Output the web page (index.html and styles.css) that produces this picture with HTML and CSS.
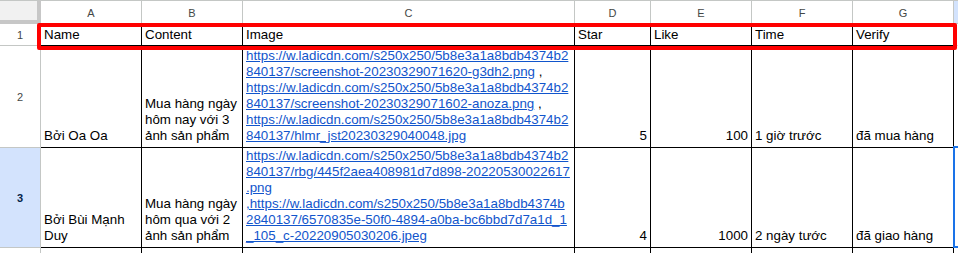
FILE: index.html
```html
<!DOCTYPE html>
<html lang="vi">
<head>
<meta charset="utf-8">
<title>Sheet</title>
<link rel="stylesheet" href="styles.css">
</head>
<body>
<div class="sheet">
  <div class="grid">
    <div class="corner"></div>
    <div class="colhead">A</div>
    <div class="colhead">B</div>
    <div class="colhead">C</div>
    <div class="colhead">D</div>
    <div class="colhead">E</div>
    <div class="colhead">F</div>
    <div class="colhead">G</div>
    <div class="colhead colhead-sel"></div>

    <div class="rowhead">1</div>
    <div class="cell head">Name</div>
    <div class="cell head">Content</div>
    <div class="cell head">Image</div>
    <div class="cell head">Star</div>
    <div class="cell head">Like</div>
    <div class="cell head">Time</div>
    <div class="cell head">Verify</div>
    <div class="cell empty"></div>

    <div class="rowhead">2</div>
    <div class="cell">Bởi Oa Oa</div>
    <div class="cell">Mua hàng ngày<br>hôm nay với 3<br>ảnh sản phẩm</div>
    <div class="cell"><span><a href="#">https://w.ladicdn.com/s250x250/5b8e3a1a8bdb4374b2<br>840137/screenshot-20230329071620-g3dh2.png</a> ,<br><a href="#">https://w.ladicdn.com/s250x250/5b8e3a1a8bdb4374b2<br>840137/screenshot-20230329071602-anoza.png</a> ,<br><a href="#">https://w.ladicdn.com/s250x250/5b8e3a1a8bdb4374b2<br>840137/hlmr_jst20230329040048.jpg</a></span></div>
    <div class="cell num">5</div>
    <div class="cell num">100</div>
    <div class="cell">1 giờ trước</div>
    <div class="cell">đã mua hàng</div>
    <div class="cell empty"></div>

    <div class="rowhead rowhead-sel">3</div>
    <div class="cell">Bởi Bùi Mạnh<br>Duy</div>
    <div class="cell">Mua hàng ngày<br>hôm qua với 2<br>ảnh sản phẩm</div>
    <div class="cell"><span><a href="#">https://w.ladicdn.com/s250x250/5b8e3a1a8bdb4374b2<br>840137/rbg/445f2aea408981d7d898-20220530022617<br>.png<br>,https://w.ladicdn.com/s250x250/5b8e3a1a8bdb4374b<br>2840137/6570835e-50f0-4894-a0ba-bc6bbd7d7a1d_1<br>_105_c-20220905030206.jpeg</a></span></div>
    <div class="cell num">4</div>
    <div class="cell num">1000</div>
    <div class="cell">2 ngày tước</div>
    <div class="cell">đã giao hàng</div>
    <div class="cell empty"></div>

    <div class="rowhead"></div>
    <div class="cell"></div>
    <div class="cell"></div>
    <div class="cell"></div>
    <div class="cell"></div>
    <div class="cell"></div>
    <div class="cell"></div>
    <div class="cell"></div>
    <div class="cell empty"></div>
  </div>
  <div class="highlight"></div>
  <div class="selection"></div>
</div>
</body>
</html>
```
FILE: styles.css
```css
* { box-sizing: border-box; }
html, body { margin: 0; padding: 0; background: #fff; }
body {
  font-family: "Liberation Sans", Arial, sans-serif;
  color: #000;
  overflow: hidden;
}
.sheet {
  position: relative;
  width: 958px;
  height: 253px;
  overflow: hidden;
}
.grid {
  display: grid;
  grid-template-columns: 41px 101px 101px 332px 76px 101px 101px 101px 1fr;
  grid-template-rows: 24px 22px 102px 100px 20px;
}
.corner {
  background: #f1f1f1;
  border-right: 4px solid #c7c7c7;
  border-bottom: 4px solid #c7c7c7;
  border-top: 1px solid #c4c7c5;
}
.colhead {
  border-top: 1px solid #c4c7c5;
  border-right: 1px solid #c4c7c5;
  border-bottom: 1px solid #c4c7c5;
  font-size: 11px;
  color: #444746;
  display: flex;
  align-items: center;
  justify-content: center;
  padding-top: 1px;
}
.colhead-sel { background: #d3e3fd; border-right: none; }
.rowhead {
  border-right: 1px solid #c4c7c5;
  border-bottom: 1px solid #c4c7c5;
  font-size: 11px;
  color: #444746;
  display: flex;
  align-items: center;
  justify-content: center;
}
.rowhead-sel {
  background: #d3e3fd;
  color: #041e49;
  font-weight: bold;
}
.cell {
  border-right: 1px solid #000;
  border-bottom: 1px solid #000;
  font-size: 13.333px;
  line-height: 16px;
  white-space: nowrap;
  padding: 0 3px 3px 3px;
  display: flex;
  flex-direction: column;
  justify-content: flex-end;
  overflow: hidden;
}
.cell.head { padding-bottom: 2px; }
.cell.num { text-align: right; align-items: flex-end; }
.cell.empty {
  border-right: none;
  border-bottom: 1px solid #e1e1e1;
}
.cell a {
  color: #1155cc;
  text-decoration: underline;
}
.highlight {
  position: absolute;
  left: 37px;
  top: 23px;
  width: 920px;
  height: 27px;
  border: 4px solid #ff0000;
  border-radius: 2px;
}
.selection {
  position: absolute;
  left: 953px;
  top: 146px;
  width: 20px;
  height: 102px;
  border: 2px solid #1a73e8;
}
```
